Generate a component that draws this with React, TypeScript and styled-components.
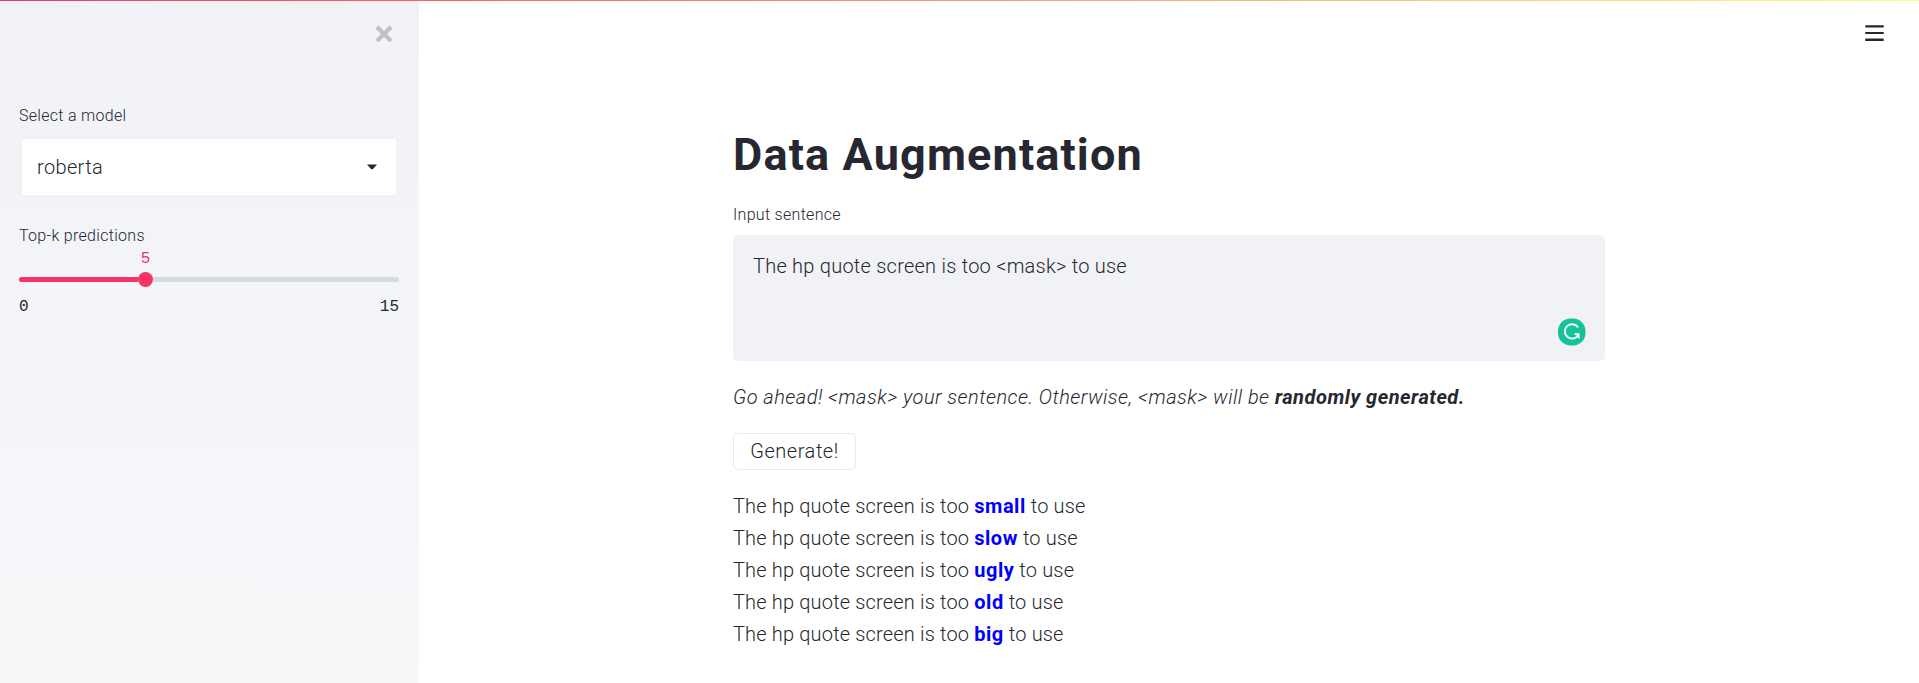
import React from "react";
import styled, { createGlobalStyle } from "styled-components";

const GlobalStyle = createGlobalStyle`
  * { box-sizing: border-box; }
  body {
    margin: 0;
    background: #fff;
    color: #262730;
    font-family: Roboto, "Open Sans", sans-serif;
    font-size: 20px;
    font-weight: 300;
    line-height: 32px;
    overflow: hidden;
  }
`;

const Page = styled.div`
  display: flex;
  flex-direction: column;
  height: 683px;
`;

const Decoration = styled.div`
  flex: none;
  height: 1px;
  background: linear-gradient(to right, #f63366, #fffd80);
`;

const Columns = styled.div`
  display: flex;
  flex: 1;
`;

const Sidebar = styled.aside`
  width: 419px;
  padding: 24px 20px 0 19px;
  background: linear-gradient(180deg, #f0f2f6, #f7f8fa);
`;

const CloseRow = styled.div`
  display: flex;
  justify-content: flex-end;
  height: 22px;
  padding-right: 6px;
`;

const Label = styled.label`
  display: block;
  font-size: 16px;
  font-weight: 350;
  line-height: 24px;
  letter-spacing: 0.3px;
`;

const SidebarBody = styled.div`
  padding-top: 57px;
`;

const Select = styled.div`
  display: flex;
  align-items: center;
  justify-content: space-between;
  height: 62px;
  margin: 8px 0 26px;
  padding: 0 19px 0 15px;
  border: 3px solid #f0f2f6;
  border-radius: 5px;
  background: #fff;
  letter-spacing: 0.35px;
`;

const SliderValue = styled.div`
  width: 253px;
  font-family: "Liberation Mono", monospace;
  font-size: 16px;
  font-weight: 400;
  line-height: 22px;
  text-align: center;
  color: #f63366;
`;

const Slider = styled.div`
  display: flex;
  align-items: center;
  height: 15px;
  margin-top: 2px;
`;

const Track = styled.div<{ $filled?: boolean }>`
  flex: ${(p) => (p.$filled ? "0 0 119px" : "1")};
  height: 5px;
  border-radius: ${(p) => (p.$filled ? "3px 0 0 3px" : "0 3px 3px 0")};
  background: ${(p) => (p.$filled ? "#f63366" : "#d5d9e3")};
`;

const Thumb = styled.div`
  width: 15px;
  height: 15px;
  border-radius: 50%;
  background: #f63366;
`;

const Range = styled.div`
  display: flex;
  justify-content: space-between;
  margin-top: 9px;
  font-family: "Liberation Mono", monospace;
  font-size: 16px;
  font-weight: 400;
  line-height: 22px;
`;

const Main = styled.main`
  flex: 1;
  display: flex;
  justify-content: space-between;
  padding-left: 314px;
`;

const Content = styled.div`
  width: 872px;
  padding-top: 125px;
`;

const MenuSlot = styled.div`
  padding: 23px 35px 0 0;
  line-height: 0;
`;

const Title = styled.h1`
  margin: 0 0 20px;
  font-size: 45px;
  font-weight: 700;
  line-height: 57px;
  letter-spacing: 1.15px;
`;

const TextArea = styled.div`
  display: flex;
  justify-content: space-between;
  height: 126px;
  margin: 8px 0 20px;
  padding: 15px 19px 15px 20px;
  border-radius: 5px;
  background: #f0f2f6;
  letter-spacing: 0.24px;
`;

const CheckerBadge = styled.svg`
  align-self: flex-end;
`;

const Hint = styled.p`
  margin: 0 0 20px;
  font-style: italic;
  letter-spacing: 0.46px;
`;

const Emphasis = styled.strong`
  font-weight: 700;
  letter-spacing: 0.52px;
`;

const Button = styled.button`
  display: block;
  width: 123px;
  height: 37px;
  margin: 0 0 20px;
  padding: 0;
  border: 1px solid #e6eaf1;
  border-radius: 5px;
  background: #fff;
  color: inherit;
  font: inherit;
  line-height: 33px;
  letter-spacing: 0.55px;
`;

const Result = styled.div`
  letter-spacing: 0.17px;
  white-space: pre;
`;

const Prediction = styled.b`
  color: #00f;
  font-weight: 700;
  letter-spacing: 0.5px;
`;

const words = ["small", "slow", "ugly", "old", "big"];

export default function App() {
  return (
    <Page>
      <GlobalStyle />
      <Decoration />
      <Columns>
        <Sidebar>
          <CloseRow>
            <svg width="18" height="18" viewBox="0 0 18 18" stroke="#bfc0c5" strokeWidth="4.2">
              <path d="M2 2 16 16M16 2 2 16" />
            </svg>
          </CloseRow>
          <SidebarBody>
            <Label>Select a model</Label>
            <Select>
              roberta
              <svg width="10" height="6" viewBox="0 0 10 6" fill="#262730">
                <path d="M0 0.5H10L6.2 4.8Q5 5.9 3.8 4.8Z" />
              </svg>
            </Select>
            <Label>Top-k predictions</Label>
            <SliderValue>5</SliderValue>
            <Slider>
              <Track $filled />
              <Thumb />
              <Track />
            </Slider>
            <Range>
              <span>0</span>
              <span>15</span>
            </Range>
          </SidebarBody>
        </Sidebar>
        <Main>
          <Content>
            <Title>Data Augmentation</Title>
            <Label>Input sentence</Label>
            <TextArea>
              The hp quote screen is too &lt;mask&gt; to use
              <CheckerBadge width="28" height="28" viewBox="0 0 28 28" fill="none">
                <rect y="0.5" width="27.5" height="27" rx="12.5" fill="#15c39a" />
                <path
                  d="M20 9.4A7.2 7.2 0 1 0 20.3 17"
                  stroke="#fff"
                  strokeWidth="1.9"
                />
                <path d="M15.8 15.2H21.5V21.2L19.6 19.3 19.8 17H17.3Z" fill="#fff" />
              </CheckerBadge>
            </TextArea>
            <Hint>
              Go ahead! &lt;mask&gt; your sentence. Otherwise, &lt;mask&gt; will be{" "}
              <Emphasis>randomly generated.</Emphasis>
            </Hint>
            <Button>Generate!</Button>
            {words.map((word) => (
              <Result key={word}>
                {"The hp quote screen is too "}
                <Prediction>{word}</Prediction>
                {" to use"}
              </Result>
            ))}
          </Content>
          <MenuSlot>
            <svg width="19" height="20" viewBox="0 0 19 20" fill="#262730">
              <path d="M0.3 1.2h18.4v2.4H0.3zM0.3 8h18.4v2H0.3zM0.3 14.6h18.4V17H0.3z" />
            </svg>
          </MenuSlot>
        </Main>
      </Columns>
    </Page>
  );
}
